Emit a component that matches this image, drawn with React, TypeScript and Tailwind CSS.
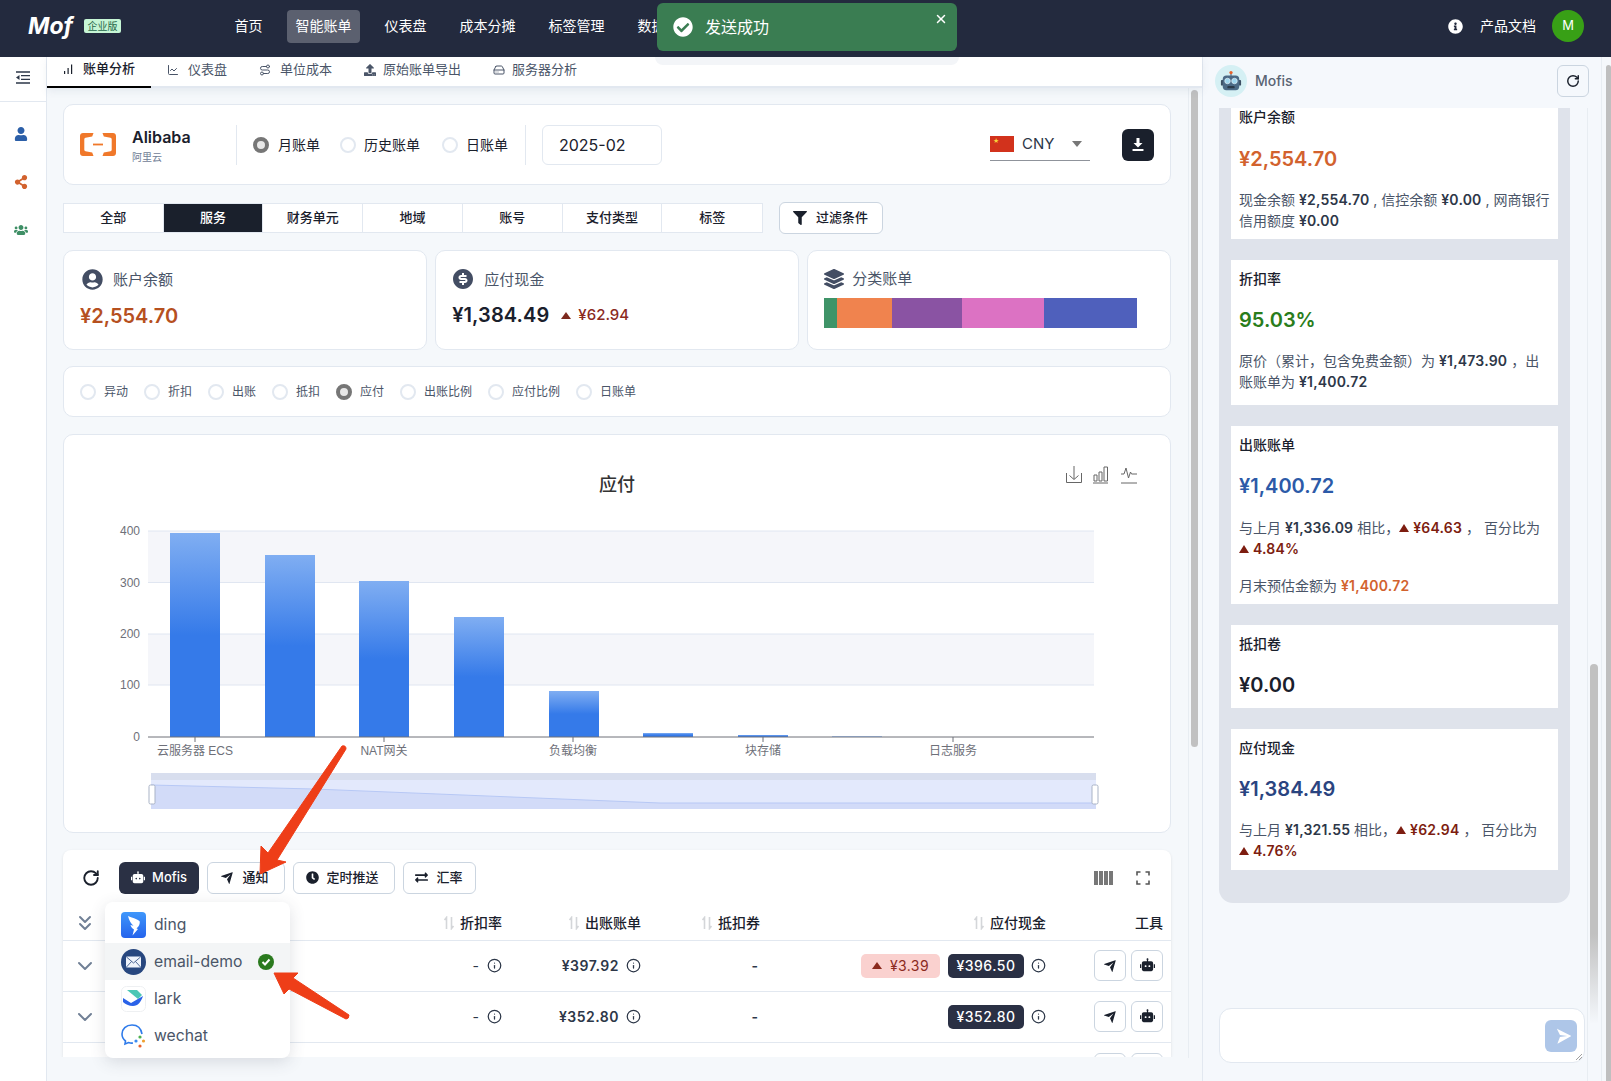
import {
  FaCheckCircle,
  FaClock,
  FaExchangeAlt,
  FaFilter,
  FaInfoCircle,
  FaLayerGroup,
  FaShareAlt,
  FaUpload,
  FaUser,
  FaUserCircle,
  FaUsers,
} from "react-icons/fa";
import { RiMoneyDollarCircleFill, RiRobot2Fill, RiSendPlaneFill } from "react-icons/ri";
import { LuChartLine, LuChevronDown, LuChevronsDown, LuHardDrive, LuInfo, LuRotateCw, LuRoute } from "react-icons/lu";
import { IoClose } from "react-icons/io5";

const NAV = ["首页", "智能账单", "仪表盘", "成本分摊", "标签管理", "数据中心"];
const SEGMENTS = ["全部", "服务", "财务单元", "地域", "账号", "支付类型", "标签"];
const METRICS = ["异动", "折扣", "出账", "抵扣", "应付", "出账比例", "应付比例", "日账单"];

function ThinBars() {
  return (
    <svg viewBox="0 0 10 10" className="w-[10px] h-[10px]" fill="#1a202c">
      <rect x="1" y="7" width="1.200" height="3" />
      <rect x="4.500" y="4" width="1.200" height="6" />
      <rect x="8" y="0.500" width="1.200" height="9.500" />
    </svg>
  );
}

const SUBTABS = [
  { label: "账单分析", icon: <ThinBars />, gap: "gap-[10px]" },
  { label: "仪表盘", icon: <LuChartLine className="w-3 h-3" />, gap: "gap-[9px]" },
  { label: "单位成本", icon: <LuRoute className="w-3 h-3" />, gap: "gap-[9px]" },
  { label: "原始账单导出", icon: <FaUpload className="w-3 h-3" />, gap: "gap-[7px]" },
  { label: "服务器分析", icon: <LuHardDrive className="w-3 h-3" />, gap: "gap-[7px]" },
];

// chart numbers are page coordinates, the svg viewBox is set to match the card
const BARS = [
  { x: 170, top: 533 },
  { x: 265, top: 555 },
  { x: 359, top: 581 },
  { x: 454, top: 617 },
  { x: 549, top: 691 },
  { x: 643, top: 733 },
  { x: 738, top: 735 },
  { x: 832, top: 736.4 },
];
const TICKS = [
  { y: 531, label: "400" },
  { y: 582.5, label: "300" },
  { y: 634, label: "200" },
  { y: 685, label: "100" },
];
const XLABELS = [
  { x: 195, label: "云服务器 ECS" },
  { x: 384, label: "NAT网关" },
  { x: 573, label: "负载均衡" },
  { x: 763, label: "块存储" },
  { x: 953, label: "日志服务" },
];

const ROWS = [
  { billed: "¥397.92", delta: "¥3.39", pay: "¥396.50" },
  { billed: "¥352.80", delta: null, pay: "¥352.80" },
];

const COLS = "grid grid-cols-[47px_253px_140px_139px_119px_286px_116px]";
const AXIS_FONT = "'Liberation Sans','Noto Sans CJK SC',sans-serif";

function Radio({ checked }: { checked?: boolean }) {
  return checked ? (
    <span className="w-4 h-4 rounded-full border-[4px] border-[#767676] bg-[#e8e8e8] shrink-0" />
  ) : (
    <span className="w-4 h-4 rounded-full border-2 border-[#e2e8f0] bg-white shrink-0" />
  );
}

function SortIcon() {
  return (
    <svg viewBox="0 0 12 14" className="w-3 h-[14px] text-[#d4d6d9]" fill="none" stroke="currentColor" strokeWidth="1.6">
      <path d="M3.5 13V1.5L1.5 4M8.5 1v11.5l2-2.5" />
    </svg>
  );
}

function PlainButton({ children, className }: { children: React.ReactNode; className: string }) {
  return (
    <div className={`h-8 rounded-md border border-[#cbd5e0] bg-white flex items-center justify-center pb-[1px] text-[13px] font-medium text-[#1a202c] ${className}`}>
      {children}
    </div>
  );
}

function AliyunLogo() {
  return (
    <svg viewBox="0 0 36 23" className="w-9 h-[23px] shrink-0">
      <path fill="#f0782a" d="M3 0h10.5l-1.3 3.4-6.7 1.4c-.8.2-1.2.7-1.2 1.4v10.6c0 .7.4 1.2 1.2 1.4l6.7 1.4L13.5 23H3c-1.7 0-3-1.3-3-3V3c0-1.7 1.3-3 3-3z" />
      <path fill="#f0782a" d="M33 0H22.5l1.3 3.4 6.7 1.4c.8.2 1.2.7 1.2 1.4v10.6c0 .7-.4 1.2-1.2 1.4l-6.7 1.4-1.3 3.4H33c1.7 0 3-1.3 3-3V3c0-1.7-1.3-3-3-3z" />
      <rect x="13" y="10.6" width="10" height="1.8" fill="#f0782a" />
    </svg>
  );
}

function RobotAvatar() {
  return (
    <div className="w-8 h-8 rounded-full bg-[#d5f0f4] flex items-center justify-center shrink-0">
      <svg viewBox="0 0 24 24" className="w-[22px] h-[22px]">
        <rect x="11" y="2.5" width="2" height="4" fill="#8a9aa8" />
        <circle cx="12" cy="2.8" r="1.8" fill="#e8622c" />
        <rect x="1" y="11" width="3" height="6" rx="1" fill="#3c4f63" />
        <rect x="20" y="11" width="3" height="6" rx="1" fill="#3c4f63" />
        <rect x="3" y="6" width="18" height="16" rx="4" fill="#4c6a86" />
        <circle cx="8.2" cy="12" r="3" fill="#9fd6ef" stroke="#dfeef5" strokeWidth="0.8" />
        <circle cx="15.8" cy="12" r="3" fill="#9fd6ef" stroke="#dfeef5" strokeWidth="0.8" />
        <rect x="8" y="17.5" width="8" height="2.5" rx="1" fill="#2b3a4a" />
      </svg>
    </div>
  );
}

function DingIcon() {
  return (
    <svg viewBox="0 0 25 26" className="w-[25px] h-[26px]">
      <defs>
        <linearGradient id="ding" x1="0" y1="0" x2="0" y2="1">
          <stop offset="0" stopColor="#3f97fb" />
          <stop offset="1" stopColor="#2563ec" />
        </linearGradient>
      </defs>
      <rect width="25" height="26" rx="4" fill="url(#ding)" />
      <path fill="#fff" d="M7 4c4 1.500 8.500 3 11.500 5 1 2.500-1 6-3 7.500l1.500.5-5.500 6.500 1.500-6c-1.500-1-3-2.500-3.500-4.500l3 .8C10 12 8 8 7 4z" />
    </svg>
  );
}

function EmailIcon() {
  return (
    <svg viewBox="0 0 25 26" className="w-[25px] h-[26px]">
      <ellipse cx="12.500" cy="13" rx="12.500" ry="13" fill="#27477f" />
      <rect x="5" y="7.500" width="15" height="11" rx="1" fill="#eef3fb" />
      <path d="M5.500 8l7 6 7-6M5.500 18l5-5.500M19.500 18l-5-5.500" fill="none" stroke="#27477f" strokeWidth="0.8" />
    </svg>
  );
}

function LarkIcon() {
  return (
    <svg viewBox="0 0 25 26" className="w-[25px] h-[26px]">
      <rect x="0.500" y="0.500" width="24" height="25" rx="5" fill="#fff" stroke="#eef0f2" />
      <path fill="#4cc7b5" d="M6 4h10l5 5-4 4z" />
      <path fill="#2a62e8" d="M2 12l8 5 12-7c-2 6-5 10-10 10-4 0-8-2-10-4z" />
    </svg>
  );
}

function WechatIcon() {
  return (
    <svg viewBox="0 0 25 26" className="w-[25px] h-[26px]">
      <path fill="none" stroke="#2f7bea" strokeWidth="1.600" d="M21 11C20 5 16 2 11 2 5 2 1 6 1 11c0 3 1.500 5.500 3.500 7l-.5 3 3.500-1.500c1.500.5 3 .7 4.500.5" />
      <circle cx="19" cy="14" r="1.600" fill="#4cb050" />
      <circle cx="22.500" cy="18" r="1.600" fill="#f0a030" />
      <circle cx="19" cy="23" r="1.600" fill="#e8622c" />
      <circle cx="15" cy="18" r="1.600" fill="#3a8af0" />
    </svg>
  );
}

function ChartIcons() {
  return (
    <g fill="none" stroke="#666" strokeWidth="1" transform="translate(-1 -1)">
      <path d="M1067.500 474v9.500h15V474M1075 467v13M1070.500 476.500l4.500 4 4.500-4" />
      <path d="M1094 484h15M1095 476h3v6h-3zM1100 473h3v9h-3zM1105 468h3.500v14H1105z" />
      <path d="M1122 484h16M1122 475h3l2-6 2.500 10 2-6 1 2h5.500" />
    </g>
  );
}

function BillChart() {
  return (
    <svg viewBox="64 435 1106 397" className="block w-full h-[397px]">
      <defs>
        <linearGradient id="bar" x1="0" y1="0" x2="0" y2="1">
          <stop offset="0" stopColor="#80aef2" />
          <stop offset="0.5" stopColor="#357ae9" />
        </linearGradient>
      </defs>
      <text x="617" y="491" textAnchor="middle" fontSize="18" fontWeight="500" fill="#333">应付</text>
      <ChartIcons />
      <rect x="148" y="531" width="946" height="51.500" fill="#f5f6fa" />
      <rect x="148" y="634" width="946" height="51" fill="#f5f6fa" />
      {TICKS.map((t) => (
        <g key={t.label}>
          <line x1="148" x2="1094" y1={t.y} y2={t.y} stroke="#e0e6f1" />
          <text x="140" y={t.y + 4} textAnchor="end" fontSize="12" fill="#6e7079" fontFamily={AXIS_FONT}>{t.label}</text>
        </g>
      ))}
      <text x="140" y="741" textAnchor="end" fontSize="12" fill="#6e7079" fontFamily={AXIS_FONT}>0</text>
      {BARS.map((b) => (
        <rect key={b.x} x={b.x} y={b.top} width="50" height={737 - b.top} fill="url(#bar)" />
      ))}
      <line x1="148" x2="1094" y1="737" y2="737" stroke="#6e7079" />
      {XLABELS.map((l) => (
        <g key={l.label}>
          <line x1={l.x} x2={l.x} y1="737" y2="742" stroke="#6e7079" />
          <text x={l.x} y="755" textAnchor="middle" fontSize="12" fill="#6e7079" fontFamily={AXIS_FONT}>{l.label}</text>
        </g>
      ))}
      <rect x="151" y="773" width="945" height="7" fill="#d8deee" />
      <rect x="151" y="780" width="945" height="29" fill="#e3e9fc" />
      <path d="M151 785L314 789L586 800L660 803H1096V809H151z" fill="#d2dbf8" />
      <path d="M151 785L314 789L586 800L660 803H1096" fill="none" stroke="#b7c8f5" />
      <rect x="149" y="785" width="6" height="19" rx="1.500" fill="#fff" stroke="#a9b3c6" />
      <rect x="1092" y="785" width="6" height="19" rx="1.500" fill="#fff" stroke="#a9b3c6" />
    </svg>
  );
}

function TopBar() {
  return (
    <header className="h-[57px] shrink-0 bg-[#232a3e] flex items-center pl-[28px] pr-[27px] pb-[5px]">
      <span className="text-[23px] font-bold italic text-white leading-none w-[56px]">Mof</span>
      <span className="h-[14px] w-[37px] rounded-[2px] bg-[#c6f6d5] text-[#276749] text-[10px] leading-[14px] text-center">企业版</span>
      <nav className="flex items-center gap-4 ml-[105px] text-sm text-white">
        {NAV.map((item) => (
          <span key={item} className={`h-[33px] px-[8.5px] rounded-[4px] flex items-center ${item === "智能账单" ? "bg-[#5b606f]" : ""}`}>
            {item}
          </span>
        ))}
      </nav>
      <FaInfoCircle className="ml-auto w-[15px] h-[15px] text-white" />
      <span className="ml-[17px] text-sm text-white">产品文档</span>
      <span className="ml-[16px] w-8 h-8 rounded-full bg-[#38a016] text-white text-[13px] flex items-center justify-center">M</span>
    </header>
  );
}

function SideRail() {
  return (
    <aside className="w-[47px] shrink-0 bg-white border-r border-[#e2e8f0]">
      <div className="h-[45px] border-b border-[#e2e8f0] flex items-center justify-center pb-[4px] pr-[1px]">
        <svg viewBox="0 0 14 13" className="w-[14px] h-[13px] text-[#2d3748]" fill="none" stroke="currentColor" strokeWidth="1.300">
          <path d="M0 1h14M5 4.700h9M5 8.300h9M0 12h14" />
          <path d="M0 6.500L3.500 4v5z" fill="currentColor" stroke="none" />
        </svg>
      </div>
      <div className="flex flex-col items-center gap-[34px] pt-[25px] pr-[5px]">
        <FaUser className="w-[14px] h-[14px] text-[#2c5fa8]" />
        <FaShareAlt className="w-[14px] h-[14px] text-[#d2622e]" />
        <FaUsers className="w-[14px] h-[14px] text-[#3f8f66]" />
      </div>
    </aside>
  );
}

function SubTabs() {
  return (
    <div className="h-[31px] shrink-0 bg-white flex border-b-2 border-[#e2e8f0] shadow-[0_3px_8px_rgba(90,110,140,0.1)] relative">
      {SUBTABS.map((t, i) => (
        <div
          key={t.label}
          className={`h-[31px] px-4 flex items-center pb-[5px] text-[13px] ${t.gap} ${i === 0 ? "border-b-2 border-black text-[#1a202c] font-medium" : "text-[#4a5568]"}`}
        >
          {t.icon}
          <span>{t.label}</span>
        </div>
      ))}
    </div>
  );
}

function ProviderCard() {
  return (
    <section className="h-[81px] rounded-[10px] border border-[#e2e8f0] bg-white flex items-center pl-[16px] pr-[16px]">
      <AliyunLogo />
      <div className="ml-[16px] w-[104px]">
        <div className="text-base font-semibold text-[#1a202c] leading-[20px] mt-[2px]">Alibaba</div>
        <div className="text-[10px] text-[#718096] leading-[14px] mt-[3px]">阿里云</div>
      </div>
      <div className="w-px h-10 bg-[#e2e8f0]" />
      <div className="ml-[16px] flex items-center gap-[20px] text-sm text-[#1a202c]">
        <label className="flex items-center gap-[9px]"><Radio checked />月账单</label>
        <label className="flex items-center gap-[8px]"><Radio />历史账单</label>
        <label className="flex items-center gap-[8px] ml-[2px]"><Radio />日账单</label>
      </div>
      <div className="ml-[17px] w-px h-10 bg-[#e2e8f0]" />
      <div className="ml-[16px] w-[120px] h-10 rounded-md border border-[#e2e8f0] flex items-center pl-4 text-base text-[#1a202c]">2025-02</div>
      <div className="ml-auto w-[100px] h-[32px] border-b border-[#8f939b] flex items-center">
        <span className="w-6 h-4 bg-[#d2321c] flex items-start pl-[3px] pt-[2px] text-[6px] leading-none text-[#f7d33a]">★</span>
        <span className="ml-2 text-[15px] text-[#2d3748]">CNY</span>
        <span className="ml-[18px] w-0 h-0 border-x-[5px] border-x-transparent border-t-[6px] border-t-[#777]" />
      </div>
      <div className="ml-8 w-8 h-8 rounded-md bg-[#1a202c] flex items-center justify-center">
        <svg viewBox="0 0 12 14" className="w-3 h-[14px]" fill="#fff">
          <path d="M4.500 0h3v5h3L6 9.500 1.500 5h3z" />
          <rect x="0.500" y="11" width="11" height="2" rx="0.500" />
        </svg>
      </div>
    </section>
  );
}

function SegmentRow() {
  return (
    <div className="mt-[17px] flex items-center">
      <div className="w-[700px] h-[30px] grid grid-cols-7 border border-[#e2e8f0] bg-white text-[13px] text-[#1a202c] font-medium">
        {SEGMENTS.map((s) => (
          <div
            key={s}
            className={`flex items-center justify-center pb-[1px] border-r border-[#e2e8f0] last:border-r-0 ${s === "服务" ? "bg-[#1a202c] text-white" : ""}`}
          >
            {s}
          </div>
        ))}
      </div>
      <PlainButton className="ml-4 w-[104px] text-sm gap-[9px] pr-[1px]">
        <FaFilter className="w-[14px] h-[14px] text-[#1a202c]" />
        过滤条件
      </PlainButton>
    </div>
  );
}

function StatCards() {
  return (
    <div className="mt-[16px] grid grid-cols-3 gap-[8.5px] h-[100px]">
      <div className="rounded-[10px] border border-[#e2e8f0] bg-white pl-[16px] pt-[18px]">
        <div className="flex items-center gap-[10px] pl-[2px] text-[15px] text-[#4a5568] leading-[21px]">
          <FaUserCircle className="w-[21px] h-[21px] text-[#434d63]" />
          账户余额
        </div>
        <div className="mt-[12px] text-[20px] font-semibold text-[#b6501f] leading-[28px]">¥2,554.70</div>
      </div>
      <div className="rounded-[10px] border border-[#e2e8f0] bg-white pl-[16px] pt-[16px]">
        <div className="flex items-center gap-[9px] text-[15px] text-[#4a5568] leading-[21px]">
          <RiMoneyDollarCircleFill className="w-[24px] h-[24px] -ml-[1px] text-[#434d63]" />
          应付现金
        </div>
        <div className="mt-[10px] flex items-center leading-[28px]">
          <span className="text-[20px] font-semibold text-[#1a202c] tracking-[0.1px]">¥1,384.49</span>
          <span className="ml-[12px] w-0 h-0 border-x-[5px] border-x-transparent border-b-[7px] border-b-[#7d2a1e]" />
          <span className="ml-[7px] text-[15px] font-medium text-[#8b2a1e]">¥62.94</span>
        </div>
      </div>
      <div className="rounded-[10px] border border-[#e2e8f0] bg-white pl-[16px] pt-[17px]">
        <div className="flex items-center gap-[8px] text-[15px] text-[#4a5568] leading-[21px]">
          <FaLayerGroup className="w-[20px] h-[20px] text-[#434d63]" />
          分类账单
        </div>
        <div className="mt-[9px] flex w-[313px] h-[30px]">
          <div className="w-[13px] bg-[#3f9468]" />
          <div className="w-[55px] bg-[#f0834e]" />
          <div className="w-[70px] bg-[#8a53a3]" />
          <div className="w-[82px] bg-[#dc72c3]" />
          <div className="w-[93px] bg-[#4f60bc]" />
        </div>
      </div>
    </div>
  );
}

function MetricRadios() {
  return (
    <section className="mt-[16px] h-[51px] rounded-[10px] border border-[#e2e8f0] bg-white flex items-center gap-4 pl-[16px] text-xs text-[#4a5568]">
      {METRICS.map((m) => (
        <label key={m} className="flex items-center gap-2">
          <Radio checked={m === "应付"} />
          {m}
        </label>
      ))}
    </section>
  );
}

function RowInfo() {
  return <LuInfo className="w-[15px] h-[15px] text-[#2d3748] shrink-0" />;
}

function ToolButtons() {
  return (
    <div className="flex justify-end gap-[5px]">
      <span className="w-[32px] h-[31px] rounded-md border border-[#cbd5e0] flex items-center justify-center">
        <RiSendPlaneFill className="w-[14px] h-[14px] text-[#1a202c]" />
      </span>
      <span className="w-[32px] h-[31px] rounded-md border border-[#cbd5e0] flex items-center justify-center">
        <RiRobot2Fill className="w-[15px] h-[15px] text-[#1a202c]" />
      </span>
    </div>
  );
}

function BillTable() {
  return (
    <section className="mt-[17px] rounded-t-[8px] bg-white shadow-[0_1px_3px_rgba(0,0,0,0.1)] h-[207px] overflow-hidden">
      <div className="h-[61px] pt-[12px] flex items-start pl-[18px] pr-[18px]">
        <div className="h-8 w-[20px] flex items-center justify-center">
          <LuRotateCw className="w-[18px] h-[18px] text-[#1a202c]" strokeWidth={2.5} />
        </div>
        <div className="ml-[18px] w-20 h-8 rounded-md bg-[#2a3044] text-white text-[13px] font-medium flex items-center justify-center gap-[7px] pb-[1px]">
          <RiRobot2Fill className="w-[14px] h-[14px]" />
          Mofis
        </div>
        <PlainButton className="ml-2 w-[78px] gap-[8px] pr-[3px]">
          <RiSendPlaneFill className="w-[14px] h-[14px]" />
          通知
        </PlainButton>
        <PlainButton className="ml-2 w-[102px] gap-[7px] pr-[3px]">
          <FaClock className="w-[13px] h-[13px]" />
          定时推送
        </PlainButton>
        <PlainButton className="ml-2 w-[73px] gap-[8px] pr-[1px]">
          <FaExchangeAlt className="w-[13px] h-[13px]" />
          汇率
        </PlainButton>
        <div className="ml-auto h-8 flex items-center gap-[23px] pr-[3px]">
          <div className="flex gap-[1px]">
            <span className="w-[4px] h-[14px] bg-[#777]" />
            <span className="w-[4px] h-[14px] bg-[#777]" />
            <span className="w-[4px] h-[14px] bg-[#777]" />
            <span className="w-[4px] h-[14px] bg-[#777]" />
          </div>
          <svg viewBox="0 0 14 14" className="w-[14px] h-[14px]" fill="none" stroke="#555" strokeWidth="1.6">
            <path d="M1 4.500V1h3.500M9.500 1H13v3.500M13 9.500V13H9.500M4.500 13H1V9.500" />
          </svg>
        </div>
      </div>
      <div className={`${COLS} h-[20px] pr-[8px] text-sm font-medium text-[#1a202c] items-center`}>
        <div className="flex justify-center pr-[4px]"><LuChevronsDown className="w-[24px] h-[24px] text-[#718096]" strokeWidth={2} /></div>
        <div />
        <div className="flex justify-end items-center gap-[5px] pr-[1px]"><SortIcon />折扣率</div>
        <div className="flex justify-end items-center gap-[5px] pr-[1px]"><SortIcon />出账账单</div>
        <div className="flex justify-end items-center gap-[5px] pr-[1px]"><SortIcon />抵扣券</div>
        <div className="flex justify-end items-center gap-[5px] pr-[1px]"><SortIcon />应付现金</div>
        <div className="text-right">工具</div>
      </div>
      <div className="h-[10px] border-b border-[#e2e8f0]" />
      {ROWS.map((r) => (
        <div key={r.billed} className={`${COLS} h-[51px] pr-[8px] pb-[1px] border-b border-[#e2e8f0] items-center text-sm text-[#2d3748]`}>
          <div className="flex justify-center pr-[4px]"><LuChevronDown className="w-[24px] h-[24px] text-[#718096]" strokeWidth={2} /></div>
          <div />
          <div className="flex justify-end items-center gap-[8px] pr-[1px]">-<RowInfo /></div>
          <div className="flex justify-end items-center gap-[7px] font-semibold tracking-[0.5px] pr-[1px]">{r.billed}<RowInfo /></div>
          <div className="flex justify-end pr-[3px] font-semibold">-</div>
          <div className="flex justify-end items-center pr-[1px]">
            {r.delta && (
              <span className="w-[79px] h-6 rounded-[5px] bg-[#fad1cf] text-[#8b2a1e] tracking-[0.4px] flex items-center justify-center gap-[8px] mr-[8px]">
                <span className="w-0 h-0 border-x-[5px] border-x-transparent border-b-[7px] border-b-[#8b2a1e]" />
                {r.delta}
              </span>
            )}
            <span className="w-[76px] h-6 rounded-[5px] bg-[#2a3044] text-white font-medium tracking-[0.5px] flex items-center justify-center">{r.pay}</span>
            <span className="ml-[7px]"><RowInfo /></span>
          </div>
          <ToolButtons />
        </div>
      ))}
      <div className={`${COLS} pt-[10px] pr-[8px]`}>
        <div className="col-start-7"><ToolButtons /></div>
      </div>
    </section>
  );
}

function Insight({ title, value, tone, children, className }: { title: string; value: string; tone: string; children?: React.ReactNode; className: string }) {
  return (
    <div className={`bg-white px-[8px] shrink-0 pt-[9px] ${className}`}>
      <div className="text-sm font-medium text-[#1a202c] leading-[20px]">{title}</div>
      <div className={`mt-[17px] text-[20px] font-semibold leading-[28px] ${tone}`}>{value}</div>
      {children}
    </div>
  );
}

function Up() {
  return <span className="inline-block w-0 h-0 align-[1px] mr-[4px] border-x-[5px] border-x-transparent border-b-[8px] border-b-[#7d1d10]" />;
}

function Money({ children, className = "text-[#2d3748]" }: { children: React.ReactNode; className?: string }) {
  return <b className={`font-semibold tracking-[0.2px] ${className}`}>{children}</b>;
}

function ChatPanel() {
  return (
    <aside className="w-[399px] shrink-0 bg-[#f5f8fc] border-l border-[#e2e8f0] flex flex-col">
      <div className="h-[51px] shrink-0 flex items-center pl-[12px] pr-[12px] pb-[4px]">
        <RobotAvatar />
        <span className="ml-2 text-sm font-medium text-[#5a6474]">Mofis</span>
        <span className="ml-auto w-8 h-8 rounded-md border border-[#cbd5e0] flex items-center justify-center">
          <LuRotateCw className="w-[14px] h-[14px] text-[#1a202c]" strokeWidth={2.5} />
        </span>
      </div>
      <div className="flex h-[973px] overflow-hidden">
        <div className="w-[384px] pl-[16px]">
          <div className="w-[351px] h-[795px] bg-[#dfe3eb] rounded-b-[14px] px-3 flex flex-col gap-[21px] text-sm leading-[21px] text-[#4a5568]">
            <div className="bg-white px-[8px] h-[131px] shrink-0">
              <div className="text-sm font-medium text-[#1a202c] leading-[18px]">账户余额</div>
              <div className="mt-[19px] text-[20px] font-semibold leading-[28px] text-[#d2622e]">¥2,554.70</div>
              <p className="mt-[16px]">现金余额 <Money>¥2,554.70</Money> , 信控余额 <Money>¥0.00</Money> , 网商银行信用额度 <Money>¥0.00</Money></p>
            </div>
            <Insight title="折扣率" value="95.03%" tone="text-[#2a7d1b]" className="h-[145px]">
              <p className="mt-[16px]">原价（累计，包含免费金额）为 <Money>¥1,473.90</Money> ，出账账单为 <Money>¥1,400.72</Money></p>
            </Insight>
            <Insight title="出账账单" value="¥1,400.72" tone="text-[#2c5aa8]" className="h-[178px]">
              <p className="mt-[17px]">与上月 <Money>¥1,336.09</Money> 相比，<Up /><Money className="text-[#7d1d10]">¥64.63</Money> ， 百分比为 <Up /><Money className="text-[#7d1d10]">4.84%</Money></p>
              <p className="mt-[16px]">月末预估金额为 <Money className="text-[#d2622e]">¥1,400.72</Money></p>
            </Insight>
            <Insight title="抵扣卷" value="¥0.00" tone="text-[#1a202c]" className="h-[83px]" />
            <Insight title="应付现金" value="¥1,384.49" tone="text-[#2a4480]" className="h-[141px]">
              <p className="mt-[16px]">与上月 <Money>¥1,321.55</Money> 相比，<Up /><Money className="text-[#7d1d10]">¥62.94</Money> ， 百分比为 <Up /><Money className="text-[#7d1d10]">4.76%</Money></p>
            </Insight>
          </div>
          <div className="mt-[105px] w-[366px] h-[55px] rounded-xl border border-[#e2e8f0] bg-white flex items-center justify-end pr-[7px] relative">
            <span className="w-8 h-8 rounded-md bg-[#aec6e8] flex items-center justify-center">
              <RiSendPlaneFill className="w-[18px] h-[18px] text-white rotate-45" />
            </span>
            <svg viewBox="0 0 8 8" className="absolute right-[1px] bottom-[1px] w-2 h-2" fill="none" stroke="#888" strokeWidth="0.8">
              <path d="M1 7l6-6M4 7l3-3" />
            </svg>
          </div>
        </div>
        <div className="w-[14px] border-l border-[#e8edf2] pl-[2px] pt-[556px]">
          <div className="w-2 h-[360px] rounded-t-full bg-gradient-to-b from-[#c1c1c1] from-[75%] to-transparent" />
        </div>
      </div>
    </aside>
  );
}

export default function App() {
  return (
    <div className="relative w-[1611px] h-[1081px] overflow-hidden bg-[#f5f8fb] flex flex-col font-[Inter,'Noto_Sans_CJK_SC',sans-serif]">
      <TopBar />
      <div className="flex flex-1 min-h-0">
        <SideRail />
        <main className="w-[1155px] shrink-0 flex flex-col">
          <SubTabs />
          <div className="flex h-[993px]">
            <div className="w-[1141px] h-[969px] pl-[16px] pr-[17px] pt-[16px] overflow-hidden">
              <ProviderCard />
              <SegmentRow />
              <StatCards />
              <MetricRadios />
              <section className="mt-[17px] rounded-[10px] border border-[#e2e8f0] bg-white overflow-hidden">
                <BillChart />
              </section>
              <BillTable />
            </div>
            <div className="w-[14px] border-l border-[#e8edf2] pl-[2px] pt-[2px] h-[970px]">
              <div className="w-[7px] h-[657px] rounded-full bg-[#c1c1c1]" />
            </div>
          </div>
        </main>
        <ChatPanel />
        <div className="w-[10px] border-l border-[#e8edf2] pl-[4px] pt-[8px]">
          <div className="w-[5px] h-full rounded-t-full bg-[#bfbfbf]" />
        </div>
      </div>

      {/* toast */}
      <div className="absolute left-[655px] top-[57px] w-[304px] h-[8px] rounded-b-lg bg-[#f3f5f8]" />
      <div className="absolute left-[657px] top-[3px] w-[300px] h-[48px] rounded-md bg-[#3a7d52] flex items-center pl-[16px] text-white text-base">
        <FaCheckCircle className="w-5 h-5" />
        <span className="ml-[12px]">发送成功</span>
        <IoClose className="absolute right-[8px] top-[8px] w-4 h-4" />
      </div>

      {/* notify channels menu */}
      <div className="absolute left-[105px] top-[902px] w-[185px] h-[156px] rounded-lg bg-white shadow-[0_4px_16px_rgba(60,70,90,0.16)] py-[4px] text-[15.7px] text-[#4a5568]">
        <div className="h-[37px] flex items-center pl-[16px] gap-[8px]"><DingIcon />ding</div>
        <div className="h-[37px] flex items-center pl-[16px] gap-[8px] bg-[#f3f5f6]">
          <EmailIcon />email-demo
          <span className="ml-[8px] w-4 h-4 rounded-full bg-[#2a7a1e] flex items-center justify-center">
            <svg viewBox="0 0 10 10" className="w-[10px] h-[10px]" fill="none" stroke="#fff" strokeWidth="2"><path d="M1.500 5l2.500 2.500 4.500-5" /></svg>
          </span>
        </div>
        <div className="h-[37px] flex items-center pl-[16px] gap-[8px]"><LarkIcon />lark</div>
        <div className="h-[37px] flex items-center pl-[16px] gap-[8px]"><WechatIcon />wechat</div>
      </div>

      {/* annotation arrows on top of the screenshot */}
      <svg className="absolute inset-0 w-[1611px] h-[1081px] pointer-events-none" viewBox="0 0 1611 1081">
        <path fill="#ee3e18" stroke="#ee3e18" strokeLinejoin="round" d="M260 874L261 846L268 853L342 746Q346 745 346 749L277 860L286 862z" />
        <path fill="#ee3e18" stroke="#ee3e18" strokeLinejoin="round" d="M274 973L298 973L293 978L349 1015Q349 1019 346 1019L289 989L284 994z" />
      </svg>
    </div>
  );
}
